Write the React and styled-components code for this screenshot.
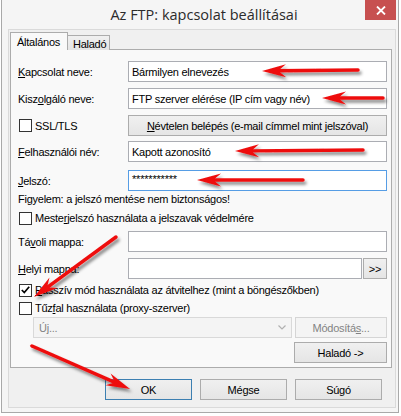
import React from "react";
import styled, { createGlobalStyle, css } from "styled-components";

const Global = createGlobalStyle`
  * { box-sizing: border-box; }
  html, body { margin: 0; padding: 0; background: #ffffff; }
  body {
    font-family: "Liberation Sans", Arial, sans-serif;
    font-size: 11px;
    letter-spacing: -0.25px;
    color: #000;
  }
`;

const Stage = styled.div`
  position: relative;
  width: 401px;
  height: 416px;
  overflow: hidden;
`;

const Window = styled.div`
  margin-left: 1px;
  width: 398px;
  height: 413px;
  background: #f5f5f5;
  border: 1px solid #a9a9a9;
  border-top: none;
  display: flex;
  flex-direction: column;
`;

const TitleBar = styled.div`
  position: relative;
  height: 29px;
  display: flex;
  align-items: center;
  justify-content: center;
  font-family: "Open Sans", "Noto Sans", sans-serif;
  font-size: 14.5px;
  letter-spacing: 0;
  color: #2b2b2b;
  padding-left: 8px;
`;

const CloseBtn = styled.div`
  position: absolute;
  top: 0;
  right: 2px;
  width: 31px;
  height: 20px;
  background: #c75050;
  display: flex;
  align-items: center;
  justify-content: center;
`;

const Client = styled.div`
  margin: 0 2px 0 6px;
  height: 379px;
  background: #f0f0f0;
  border: 1px solid #dadada;
  padding: 2px 3px 0 1px;
  display: flex;
  flex-direction: column;
`;

const TabStrip = styled.div`
  display: flex;
  align-items: flex-end;
  height: 18px;
  position: relative;
  z-index: 2;
`;

const Tab = styled.div`
  border: 1px solid #acacac;
  border-bottom: none;
  display: flex;
  align-items: center;
  padding: 0 5px;
  ${(p) =>
    p.$active
      ? css`
          height: 18px;
          width: 58px;
          background: #f9f9f9;
          padding-left: 6px;
        `
      : css`
          height: 15px;
          width: 43px;
          margin-left: -1px;
          background: linear-gradient(#f0f0f0, #e5e5e5);
          padding-top: 1px;
        `}
`;

const Panel = styled.div`
  margin-top: -1px;
  height: 319px;
  border: 1px solid #acacac;
  background: #f9f9f9;
  padding: 11px 4px 0 7px;
  display: flex;
  flex-direction: column;
`;

const Row = styled.div`
  display: flex;
  align-items: center;
  height: ${(p) => p.$h || 21}px;
  margin-top: ${(p) => p.$mt || 0}px;
  padding-left: ${(p) => p.$indent || 0}px;
  white-space: nowrap;
`;

const Label = styled.div`
  width: 110px;
  flex: none;
  white-space: nowrap;
`;

const Input = styled.div`
  flex: ${(p) => (p.$w ? "none" : "1")};
  width: ${(p) => (p.$w ? p.$w + "px" : "auto")};
  height: 21px;
  background: #fff;
  border: 1px solid ${(p) => (p.$focus ? "#569de5" : "#abadb3")};
  padding: 0 3px;
  display: flex;
  align-items: center;
  white-space: nowrap;
  overflow: hidden;
  ${(p) =>
    p.$password &&
    css`
      align-items: flex-start;
      padding-top: 2px;
      letter-spacing: -0.2px;
    `}
`;

const Button = styled.div`
  flex: ${(p) => (p.$w ? "none" : "1")};
  width: ${(p) => (p.$w ? p.$w + "px" : "auto")};
  height: ${(p) => p.$h || 21}px;
  border: 1px solid ${(p) => (p.$default ? "#3c7fb1" : p.$disabled ? "#d5d5d5" : "#acacac")};
  background: ${(p) => (p.$disabled ? "#f4f4f4" : "linear-gradient(#f0f0f0, #e5e5e5)")};
  color: ${(p) => (p.$disabled ? "#838383" : "#000")};
  display: flex;
  align-items: center;
  justify-content: center;
  white-space: nowrap;
  margin-left: ${(p) => p.$ml || 0}px;
`;

const Check = styled.div`
  width: 13px;
  height: 13px;
  flex: none;
  border: 1px solid #333;
  background: #fff;
  margin-left: 1px;
  margin-right: 3px;
  display: flex;
  align-items: center;
  justify-content: center;
`;

const CheckRow = styled(Row)`
  height: 14px;
`;

const Select = styled.div`
  width: 259px;
  height: 21px;
  border: 1px solid #d9d9d9;
  background: #f4f4f4;
  color: #838383;
  display: flex;
  align-items: center;
  justify-content: space-between;
  padding: 0 5px;
`;

const Spacer = styled.div`
  flex: 1;
`;

const Footer = styled.div`
  display: flex;
  justify-content: flex-end;
  gap: 8px;
  margin-top: 11px;
  padding-right: 10px;
`;

const U = styled.span`
  text-decoration: underline;
  text-underline-offset: 1px;
`;

const Overlay = styled.svg`
  position: absolute;
  left: 0;
  top: 0;
  pointer-events: none;
`;

function Arrow({ tip, tail }) {
  const [x1, y1] = tip;
  const [x2, y2] = tail;
  const dx = x2 - x1;
  const dy = y2 - y1;
  const len = Math.hypot(dx, dy);
  const ux = dx / len;
  const uy = dy / len;
  const nx = -uy;
  const ny = ux;
  const L = 24;
  const W = 6.5;
  const p = (a, b) => `${(x1 + ux * a + nx * b).toFixed(1)},${(y1 + uy * a + ny * b).toFixed(1)}`;
  const head = [p(0, 0), p(L, W), p(L - 6, 1.5), p(L - 6, -1.5), p(L, -W)].join(" ");
  return (
    <g filter="url(#sh)">
      <line
        x1={x1 + ux * (L - 8)}
        y1={y1 + uy * (L - 8)}
        x2={x2}
        y2={y2}
        stroke="#ee1111"
        strokeWidth="3.5"
        strokeLinecap="round"
      />
      <polygon points={head} fill="#ee1111" />
    </g>
  );
}

export default function App() {
  return (
    <Stage>
      <Global />
      <Window>
        <TitleBar>
          Az FTP: kapcsolat beállításai
          <CloseBtn>
            <svg width="10" height="9" viewBox="0 0 10 9">
              <path d="M1 0.5 L9 8.5 M9 0.5 L1 8.5" stroke="#fff" strokeWidth="1.8" />
            </svg>
          </CloseBtn>
        </TitleBar>
        <Client>
          <TabStrip>
            <Tab $active>Általános</Tab>
            <Tab>Haladó</Tab>
          </TabStrip>
          <Panel>
            <Row>
              <Label>
                <U>K</U>apcsolat neve:
              </Label>
              <Input>Bármilyen elnevezés</Input>
            </Row>
            <Row $mt={6}>
              <Label>
                Kisz<U>o</U>lgáló neve:
              </Label>
              <Input>FTP szerver elérése (IP cím vagy név)</Input>
            </Row>
            <Row $mt={6}>
              <Label>
                <Row $h={14}>
                  <Check />
                  SSL/TLS
                </Row>
              </Label>
              <Button>
                <U>N</U>évtelen belépés (e-mail címmel mint jelszóval)
              </Button>
            </Row>
            <Row $mt={5}>
              <Label>
                <U>F</U>elhasználói név:
              </Label>
              <Input>Kapott azonosító</Input>
            </Row>
            <Row $mt={8}>
              <Label>
                <U>J</U>elszó:
              </Label>
              <Input $focus $password>
                ***********
              </Input>
            </Row>
            <Row $mt={1} $h={14}>
              Figyelem: a jelszó mentése nem biztonságos!
            </Row>
            <CheckRow $mt={5}>
              <Check />
              Meste<U>r</U>jelszó használata a jelszavak védelmére
            </CheckRow>
            <Row $mt={6}>
              <Label>
                Tá<U>v</U>oli mappa:
              </Label>
              <Input />
            </Row>
            <Row $mt={6}>
              <Label>
                <U>H</U>elyi mappa:
              </Label>
              <Input />
              <Button $w={24} $ml={1}>
                &gt;&gt;
              </Button>
            </Row>
            <CheckRow $mt={4}>
              <Check>
                <svg width="9" height="8" viewBox="0 0 9 8">
                  <path d="M0.8 4 L3.3 6.6 L8.2 0.8" fill="none" stroke="#000" strokeWidth="1.7" />
                </svg>
              </Check>
              <U>P</U>asszív mód használata az átvitelhez (mint a böngészőkben)
            </CheckRow>
            <CheckRow $mt={4}>
              <Check />
              Tűz<U>f</U>al használata (proxy-szerver)
            </CheckRow>
            <Row $mt={2} $indent={15}>
              <Select>
                <span>Új...</span>
                <svg width="8" height="5" viewBox="0 0 8 5">
                  <path d="M0.5 0.5 L4 4 L7.5 0.5" fill="none" stroke="#b0b0b0" strokeWidth="1.2" />
                </svg>
              </Select>
              <Spacer />
              <Button $w={92} $disabled>
                Módosítá<U>s</U>...
              </Button>
            </Row>
            <Row $mt={4}>
              <Spacer />
              <Button $w={93}>Haladó -&gt;</Button>
            </Row>
          </Panel>
          <Footer>
            <Button $w={87} $default>
              OK
            </Button>
            <Button $w={87}>Mégse</Button>
            <Button $w={87}>Súgó</Button>
          </Footer>
        </Client>
      </Window>
      <Overlay width="401" height="416" viewBox="0 0 401 416">
        <defs>
          <filter id="sh" x="-20%" y="-50%" width="140%" height="200%">
            <feDropShadow dx="2" dy="3" stdDeviation="1.6" floodColor="#000" floodOpacity="0.45" />
          </filter>
        </defs>
        <Arrow tip={[262, 71]} tail={[358, 70]} />
        <Arrow tip={[322, 98]} tail={[383, 98]} />
        <Arrow tip={[235, 151]} tail={[363, 150]} />
        <Arrow tip={[197, 180]} tail={[303, 180]} />
        <Arrow tip={[34, 297]} tail={[116, 237]} />
        <Arrow tip={[130, 389]} tail={[32, 346]} />
      </Overlay>
    </Stage>
  );
}
